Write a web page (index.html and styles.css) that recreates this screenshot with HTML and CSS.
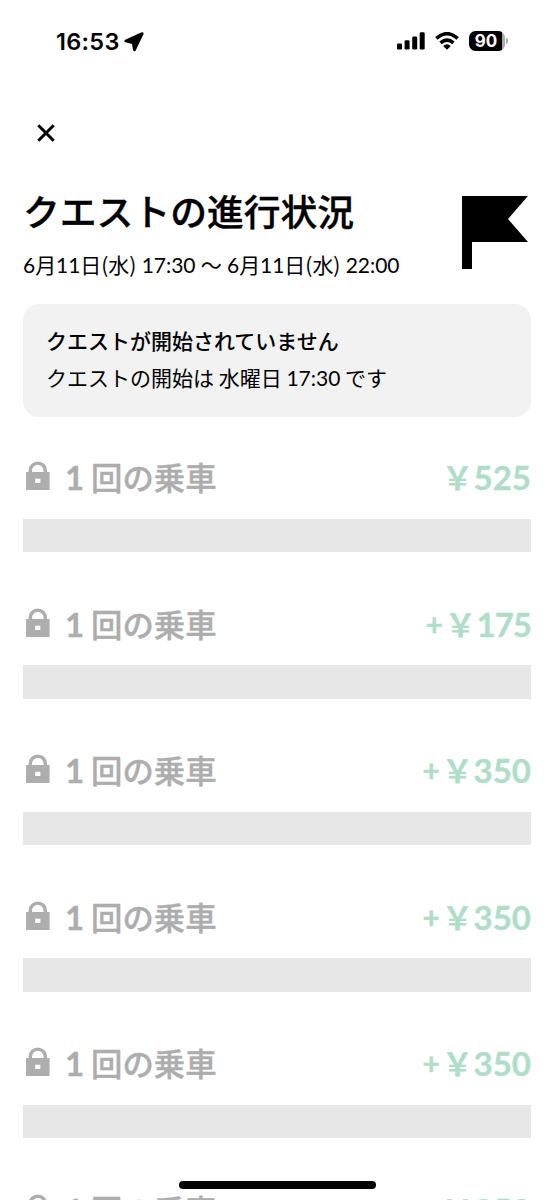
FILE: index.html
```html
<!DOCTYPE html>
<html lang="ja">
<head>
<meta charset="utf-8">
<title>クエストの進行状況</title>
<link rel="stylesheet" href="styles.css">
</head>
<body>
<svg class="defs" width="0" height="0" aria-hidden="true">
  <symbol id="lock" viewBox="0 0 24 30">
    <path fill="currentColor" fill-rule="evenodd" d="M0 11H2.6V9.6a9.2 9.2 0 0 1 18.4 0V11H23.6V29H0ZM6 11H17.6V9.6a5.8 5.8 0 0 0-11.6 0ZM9.2 17.8V22H14.4V17.8Z"/>
  </symbol>
</svg>
<div class="screen">
  <header class="status">
    <div class="clock">16:53</div>
    <svg class="location" viewBox="0 0 20 20"><path d="M1.8 9 18.2 1.6 10.4 17.8 9.2 10.8Z"/></svg>
    <svg class="signal" viewBox="0 0 28 18"><rect x="0" y="11.5" width="5" height="6" rx="1.3"/><rect x="7.6" y="8.2" width="5" height="9.3" rx="1.3"/><rect x="15.2" y="4.4" width="5" height="13.1" rx="1.3"/><rect x="22.7" y="0.3" width="5" height="17.2" rx="1.3"/></svg>
    <svg class="wifi" viewBox="0 0 24 18"><path class="arc" d="M1.3 6.4Q12-3.1 22.7 6.4M5.5 10.9Q12 5.3 18.5 10.9"/><path d="M8.2 14Q12 10.7 15.8 14L12 17.8Z"/></svg>
    <div class="battery"><span class="charge">90</span><span class="cap"></span></div>
  </header>
  <nav class="nav"><svg class="close" viewBox="0 0 18 18"><path d="M1.3 1.3 16.7 16.7M16.7 1.3 1.3 16.7"/></svg></nav>
  <main class="content">
    <section class="heading">
      <div>
        <h1 class="title">クエストの進行状況</h1>
        <p class="period">6月11日<span class="paren">(</span>水<span class="paren">)</span> 17:30 〜 6月11日<span class="paren">(</span>水<span class="paren">)</span> 22:00</p>
      </div>
      <svg class="flag" viewBox="0 0 66 73"><path d="M0 0H66L46 23 66 46H10V73H0Z"/></svg>
    </section>
    <section class="notice">
      <p class="notice-title">クエストが開始されていません</p>
      <p class="notice-text">クエストの開始は 水曜日 <span class="time">17:30</span> です</p>
    </section>
    <section class="steps">
      <article class="step"><div class="row"><svg class="lock"><use href="#lock"/></svg><span class="rides"><span class="count">1</span>回の乗車</span><span class="reward"><span class="yen">&#xFFE5;</span>525</span></div><div class="bar"></div></article>
      <article class="step"><div class="row"><svg class="lock"><use href="#lock"/></svg><span class="rides"><span class="count">1</span>回の乗車</span><span class="reward"><span class="plus">+</span><span class="yen">&#xFFE5;</span><span class="narrow">175</span></span></div><div class="bar"></div></article>
      <article class="step"><div class="row"><svg class="lock"><use href="#lock"/></svg><span class="rides"><span class="count">1</span>回の乗車</span><span class="reward"><span class="plus">+</span><span class="yen">&#xFFE5;</span>350</span></div><div class="bar"></div></article>
      <article class="step"><div class="row"><svg class="lock"><use href="#lock"/></svg><span class="rides"><span class="count">1</span>回の乗車</span><span class="reward"><span class="plus">+</span><span class="yen">&#xFFE5;</span>350</span></div><div class="bar"></div></article>
      <article class="step"><div class="row"><svg class="lock"><use href="#lock"/></svg><span class="rides"><span class="count">1</span>回の乗車</span><span class="reward"><span class="plus">+</span><span class="yen">&#xFFE5;</span>350</span></div><div class="bar"></div></article>
      <article class="step"><div class="row"><svg class="lock"><use href="#lock"/></svg><span class="rides"><span class="count">1</span>回の乗車</span><span class="reward"><span class="yen">&#xFFE5;</span>350</span></div><div class="bar"></div></article>
    </section>
  </main>
  <div class="home"></div>
</div>
</body>
</html>
```
FILE: styles.css
```css
* { box-sizing: border-box; }
body { margin: 0; background: #fff; }
h1, p { margin: 0; }
.defs { position: absolute; }
.screen { position: relative; width: 554px; height: 1200px; overflow: hidden; color: #000; font-family: "Noto Sans CJK JP", sans-serif; }
.status { display: flex; align-items: center; height: 82px; padding: 0 46px 0 56px; }
.clock { width: 64px; padding-top: 1px; font: 600 23.5px/30px Inter, sans-serif; letter-spacing: 0.3px; white-space: nowrap; }
.location { width: 20px; height: 20px; margin: 1px 0 0 4px; stroke: #000; stroke-width: 2.8; stroke-linejoin: round; }
.signal { width: 28px; height: 18px; margin-left: auto; }
.wifi { width: 24px; height: 18px; margin-left: 10px; }
.arc { fill: none; stroke: #000; stroke-width: 3.5; }
.battery { display: flex; align-items: center; margin-left: 10px; gap: 1px; }
.charge { width: 36px; height: 20px; border-radius: 6.5px; background: linear-gradient(90deg, #000 33px, #aaa 33px); color: #fff; font: 700 17px/20px Inter, sans-serif; text-align: center; padding-right: 2px; }
.cap { width: 2px; height: 6px; border-radius: 0 2px 2px 0; background: #aaa; }
.nav { display: flex; align-items: center; height: 101px; padding-left: 37px; }
.close { width: 18px; height: 18px; stroke: #000; stroke-width: 3; }
.content { padding: 0 23px; }
.heading { display: flex; justify-content: space-between; height: 121px; }
.title { font-size: 36.8px; line-height: 54px; font-weight: 500; white-space: nowrap; -webkit-text-stroke: 0.35px #000; }
.period { margin-top: 11px; font-family: Lato, "Noto Sans CJK JP", sans-serif; font-size: 21px; line-height: 32px; letter-spacing: -0.05px; white-space: nowrap; }
.paren { font-family: "Noto Sans CJK JP", sans-serif; }
.flag { width: 66px; height: 73px; margin: 13px 3px 0 0; }
.notice { height: 113px; padding: 18px 23px; border-radius: 16px; background: #f2f2f2; }
.notice-title, .notice-text { font-size: 21px; line-height: 37px; white-space: nowrap; }
.notice-title { font-weight: 500; }
.time { font-family: Lato, sans-serif; }
.steps { padding-top: 29px; }
.step { height: 146.5px; }
.row { display: flex; height: 72.5px; align-items: flex-start; color: #adadad; font-size: 31.4px; line-height: 61px; font-weight: 500; -webkit-text-stroke: 0.35px currentColor; }
.lock { width: 24px; height: 30px; margin: 15px 0 0 3px; }
.rides { margin-left: 15px; white-space: nowrap; }
.count { display: inline-block; width: 26px; font: 700 33px/61px Lato, sans-serif; }
.reward { display: flex; margin-left: auto; color: #afdec8; font: 700 33px/62px Lato, sans-serif; white-space: nowrap; }
.narrow { letter-spacing: -1px; }
.plus { width: 19px; font-size: 30px; }
.yen { width: 32px; font: 700 32px/61px "Noto Sans CJK JP", sans-serif; -webkit-text-stroke: 0; }
.bar { height: 33.5px; background: #e7e7e7; }
.home { position: absolute; left: 179px; bottom: 11px; width: 197px; height: 8px; border-radius: 4px; background: #000; }
```
